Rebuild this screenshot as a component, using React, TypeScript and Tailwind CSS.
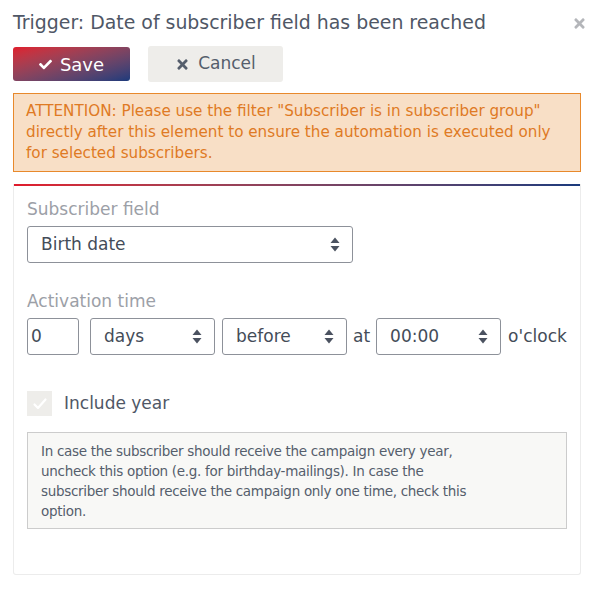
import { FaCheck, FaTimes } from 'react-icons/fa'

const SANS = "font-['DejaVu_Sans',sans-serif]"

function Arrows() {
  return (
    <svg width="10" height="15" viewBox="0 0 10 15" className="shrink-0">
      <path d="M5 0.5 L9.5 6 L0.5 6 Z" fill="#4b5260" />
      <path d="M5 14.5 L9.5 9 L0.5 9 Z" fill="#4b5260" />
    </svg>
  )
}

function Select({ value, width }: { value: string; width: string }) {
  return (
    <div
      className={`${width} h-[37px] flex items-center justify-between border border-[#8d9199] rounded-[3px] pl-[13px] pr-[12px] text-[#444c58]`}
    >
      <span>{value}</span>
      <Arrows />
    </div>
  )
}

export default function App() {
  return (
    <div className={`w-[600px] h-[593px] bg-white pl-[13px] pr-[19px] pt-[9px] ${SANS}`}>
      <div className="flex items-center justify-between h-[25px]">
        <h1 className="text-[18.9px] text-[#4f5766] mt-[1px]">Trigger: Date of subscriber field has been reached</h1>
        <FaTimes className="text-[#b4b6ba] w-[15px] h-[15px] mr-[-6px] mt-[3px]" />
      </div>

      <div className="flex gap-[18px] mt-[12px] items-center">
        <button className="w-[117px] h-[34px] rounded-[3px] bg-linear-to-br from-[#e01a2b] to-[#1a3a7c] text-white text-[18px] flex items-center justify-center gap-[8px]">
          <FaCheck className="w-[13px] h-[13px]" />
          <span>Save</span>
        </button>
        <button className="w-[135px] h-[36px] rounded-[3px] bg-[#eeedea] text-[#555e6c] text-[17px] flex items-center justify-center gap-[8px]">
          <FaTimes className="w-[15px] h-[15px]" />
          <span>Cancel</span>
        </button>
      </div>

      <div className="mt-[11px] border border-[#e8892c] bg-[#f8dfc6] px-[12px] pt-[7px] pb-[7px] text-[15.2px] leading-[21px] text-[#df7a24]">
        ATTENTION: Please use the filter "Subscriber is in subscriber group"
        <br />
        directly after this element to ensure the automation is executed only
        <br />
        for selected subscribers.
      </div>

      <div className="mt-[12px] h-[391px] border border-t-0 border-[#ececec] rounded-b-[3px]">
        <div className="h-[2px] bg-linear-to-r from-[#e01a2b] to-[#1a3a7c]" />
        <div className="pl-[13px] pr-[13px] pt-[12px] text-[17px]">
          <div className="text-[#9ca0a7] leading-[22px]">Subscriber field</div>
          <div className="mt-[6px]">
            <Select value="Birth date" width="w-[326px]" />
          </div>

          <div className="text-[#9ca0a7] leading-[22px] mt-[27px]">Activation time</div>
          <div className="flex items-center mt-[6px] text-[#444c58]">
            <div className="w-[52px] h-[37px] border border-[#8d9199] rounded-[3px] flex items-center pl-[3px]">0</div>
            <div className="ml-[11px]">
              <Select value="days" width="w-[125px]" />
            </div>
            <div className="ml-[7px]">
              <Select value="before" width="w-[125px]" />
            </div>
            <span className="ml-[6px]">at</span>
            <div className="ml-[6px]">
              <Select value="00:00" width="w-[125px]" />
            </div>
            <span className="ml-[7px]">o'clock</span>
          </div>

          <div className="flex items-center mt-[36px]">
            <div className="w-[25px] h-[25px] bg-[#eeedea] flex items-center justify-center">
              <svg width="16" height="16" viewBox="0 0 16 16">
                <path d="M2.5 8.5 L6 12 L13.5 3.5" fill="none" stroke="white" strokeWidth="2.2" strokeLinecap="round" strokeLinejoin="round" />
              </svg>
            </div>
            <span className="ml-[12px] text-[#4f5766]">Include year</span>
          </div>

          <div className="mt-[15px] border border-[#cccccc] bg-[#f8f8f6] px-[13px] pt-[8px] pb-[7px] text-[13.5px] leading-[20px] text-[#555e6c] tracking-[-0.3px]">
            In case the subscriber should receive the campaign every year,
            <br />
            uncheck this option (e.g. for birthday-mailings). In case the
            <br />
            subscriber should receive the campaign only one time, check this
            <br />
            option.
          </div>
        </div>
      </div>
    </div>
  )
}
